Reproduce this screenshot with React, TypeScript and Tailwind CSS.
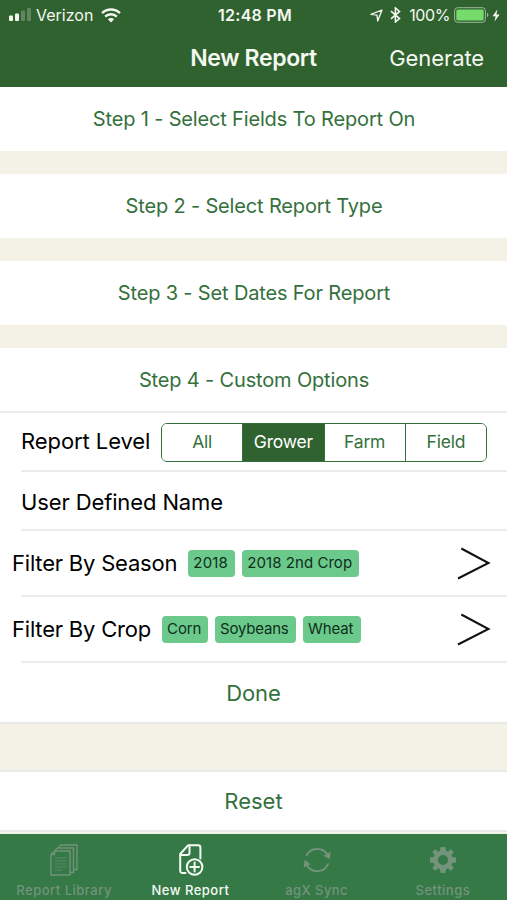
import { useState } from "react";

const steps = [
  "Step 1 - Select Fields To Report On",
  "Step 2 - Select Report Type",
  "Step 3 - Set Dates For Report",
  "Step 4 - Custom Options",
];

const levels = ["All", "Grower", "Farm", "Field"];

const seasons = [
  { name: "2018", style: "w-[47px] tracking-[0.2px]" },
  { name: "2018 2nd Crop", style: "w-[117px] tracking-[0.05px]" },
];

const crops = [
  { name: "Corn", style: "w-[46px] tracking-[-0.1px]" },
  { name: "Soybeans", style: "w-[81px] tracking-[-0.2px]" },
  { name: "Wheat", style: "w-[58px] tracking-[-0.1px]" },
];

function StatusBar() {
  return (
    <div className="grid h-[30px] grid-cols-[1fr_auto_1fr] items-center pl-2 pr-[7px] text-[16px]">
      <div className="flex items-center">
        <svg width="25" height="14" viewBox="0 0 25 14" fill="currentColor">
          <rect x="1" y="7.5" width="4" height="5.5" rx="1" />
          <rect x="7" y="5.5" width="4" height="7.5" rx="1" />
          <rect x="13" y="2.5" width="4" height="10.5" rx="1" opacity="0.25" />
          <rect x="19" y="0" width="4" height="13" rx="1" opacity="0.25" />
        </svg>
        <span className="ml-[3px]">Verizon</span>
        <svg className="ml-[8px]" width="20" height="15" viewBox="0 0 20 15" fill="none" stroke="currentColor" strokeWidth="2.5">
          <path d="M1.1 5.2a12.6 12.6 0 0 1 17.8 0" />
          <path d="M4.2 8.6a8.2 8.2 0 0 1 11.6 0" />
          <path d="M6.9 11.2a4.4 4.4 0 0 1 6.2 0L10 14.4z" fill="currentColor" stroke="none" />
        </svg>
      </div>
      <span className="pl-[2px] font-semibold tracking-[0.25px]">12:48 PM</span>
      <div className="flex items-center justify-end">
        <svg width="13" height="13" viewBox="0 0 13 13" fill="none" stroke="currentColor" strokeWidth="1.3" strokeLinejoin="round">
          <path d="M12 1 1 5.4 7 6.1 7.7 12z" />
        </svg>
        <svg className="ml-[7px]" width="11" height="16" viewBox="0 0 11 16" fill="none" stroke="currentColor" strokeWidth="1.6">
          <path d="M1 4.2 9.5 11.6 5.4 15V1l4.1 3.4L1 11.8" />
        </svg>
        <span className="ml-[8px] tracking-[-0.4px]">100%</span>
        <svg className="ml-[4px]" width="36" height="16" viewBox="0 0 36 16">
          <rect x="0.6" y="0.7" width="30.8" height="14.6" rx="3" fill="none" stroke="#9dbb9b" strokeWidth="1" />
          <rect x="2.3" y="2.4" width="27.4" height="11.2" rx="1.5" fill="#75dc6c" />
          <path d="M33 5.8c1.8.6 1.8 3.8 0 4.4z" fill="#9dbb9b" />
        </svg>
        <svg className="ml-[2px]" width="8" height="13" viewBox="0 0 8 13" fill="currentColor">
          <path d="M5.4.5.5 7.2h3.1L2.5 12.5 7.6 5.6H4.4z" />
        </svg>
      </div>
    </div>
  );
}

function Chevron() {
  return (
    <svg className="mr-4" width="34" height="34" viewBox="0 0 34 34" fill="none" stroke="#111" strokeWidth="2">
      <path d="M4.3 2.5 31.5 17 1 32.5" />
    </svg>
  );
}

function FilterRow({ label, tags }: { label: string; tags: { name: string; style: string }[] }) {
  return (
    <div className="flex h-[66px] flex-col">
      <div className="flex flex-1 items-center pl-3">
        <span className="text-[22px] tracking-[-0.2px]">{label}</span>
        <div className="ml-[11px] flex gap-[7px]">
          {tags.map((t) => (
            <span
              key={t.name}
              className={`flex h-[27px] items-center whitespace-nowrap rounded-[4px] bg-[#6cc98c] pl-[5px] text-[15px] text-[#0d2f1a] ${t.style}`}
            >
              {t.name}
            </span>
          ))}
        </div>
        <div className="ml-auto">
          <Chevron />
        </div>
      </div>
      <div className="ml-[21px] h-[2px] bg-[#ebebeb]" />
    </div>
  );
}

function LibraryIcon() {
  return (
    <svg width="28" height="32" viewBox="0 0 28 32" fill="none" stroke="currentColor" strokeWidth="1.4" strokeLinejoin="round">
      <path d="M4.5 7H20v24H1V10.5z" />
      <path d="M4.5 7v3.5H1M5 6.5 7.5 4H23.5v24.5H20M8.5 3.5 11 1H27v24.5h-3.5" />
      <path d="M4.5 14h12M4.5 17h12M4.5 20h12M4.5 23h12M4.5 26h8" strokeWidth="0.9" opacity="0.75" />
    </svg>
  );
}

function NewReportIcon() {
  return (
    <svg className="ml-[2px]" width="25" height="32" viewBox="0 0 25 32" fill="none" stroke="currentColor" strokeWidth="2" strokeLinejoin="round" strokeLinecap="round">
      <path d="M6.5 29H3.4a2.2 2.2 0 0 1-2.2-2.2V10L9.2 1.2h10A2.2 2.2 0 0 1 21.4 3.4v11" />
      <path d="M1.5 11h6.8a2.2 2.2 0 0 0 2.2-2.2V1.5" />
      <circle cx="15.6" cy="23" r="7.8" />
      <path d="M15.6 18.6v8.8M11.2 23H20" />
    </svg>
  );
}

function SyncIcon() {
  return (
    <svg width="28" height="28" viewBox="0 0 28 28" fill="none" stroke="currentColor" strokeWidth="1.9">
      <path d="M3.3 10A12 12 0 0 1 24.6 9" />
      <path d="M25.3 17.5A12 12 0 0 1 4 19.6" />
      <path d="M20.4 9.8 27.5 5.8 26.8 13.2zM.6 21.6 1.6 13.8 7.6 18.2z" fill="currentColor" stroke="none" />
    </svg>
  );
}

function GearIcon() {
  return (
    <svg width="28" height="28" viewBox="0 0 28 28" fill="currentColor">
      <path
        fillRule="evenodd"
        d="M11.5 1h5l.7 3.9 1.6.7L22 3.3 24.7 6l-2.3 3.2.7 1.6 3.9.7v5l-3.9.7-.7 1.6 2.3 3.2-2.7 2.7-3.2-2.3-1.6.7-.7 3.9h-5l-.7-3.9-1.6-.7L6 24.7 3.3 22l2.3-3.2-.7-1.6L1 16.5v-5l3.9-.7.7-1.6L3.3 6 6 3.3l3.2 2.3 1.6-.7zM14 9a5 5 0 1 0 0 10 5 5 0 0 0 0-10z"
      />
    </svg>
  );
}

const tabs = [
  { label: "Report Library", icon: <LibraryIcon />, spacing: "tracking-[0.5px]" },
  { label: "New Report", icon: <NewReportIcon />, spacing: "tracking-[0.5px]" },
  { label: "agX Sync", icon: <SyncIcon />, spacing: "tracking-[0.45px]" },
  { label: "Settings", icon: <GearIcon />, spacing: "tracking-[0.5px]" },
];

export default function App() {
  const [level, setLevel] = useState("Grower");
  const [tab, setTab] = useState("New Report");

  return (
    <div className="flex h-[900px] w-[507px] flex-col overflow-hidden bg-[#f4f2e6] font-['Inter',sans-serif] text-black">
      <header className="h-[87px] shrink-0 bg-[#306230] text-[#f4f8f1]">
        <StatusBar />
        <div className="grid h-[56px] grid-cols-[1fr_auto_1fr] items-center">
          <h1 className="col-start-2 text-[23px] font-semibold tracking-[-0.35px]">New Report</h1>
          <button className="justify-self-end pr-[23px] text-[22px] tracking-[-0.1px]">Generate</button>
        </div>
      </header>

      <main className="flex flex-1 flex-col">
        <div className="flex flex-col gap-[23px]">
          {steps.map((s) => (
            <button key={s} className="h-[64px] bg-white pl-px text-[20px] tracking-[-0.16px] text-[#34703c] last:h-[63px]">
              {s}
            </button>
          ))}
        </div>

        <section className="border-t-2 border-[#ebebeb] bg-white">
          <div className="ml-[21px] flex h-[59px] items-center border-b-2 border-[#ebebeb]">
            <span className="text-[22px] tracking-[-0.08px]">Report Level</span>
            <div className="ml-auto mr-5 mt-[2px] flex h-[39px] w-[326px] overflow-hidden rounded-[6px] border border-[#34703c]">
              {levels.map((l) => (
                <button
                  key={l}
                  onClick={() => setLevel(l)}
                  className={`flex-1 border-l border-[#34703c] text-[17.5px] tracking-[-0.2px] first:border-l-0 ${
                    l === level ? "bg-[#306230] text-white" : "bg-white text-[#34703c]"
                  }`}
                >
                  {l}
                </button>
              ))}
            </div>
          </div>
          <div className="ml-[21px] flex h-[59px] items-center border-b-2 border-[#ebebeb] pt-[3px]">
            <span className="text-[22px] tracking-[-0.12px]">User Defined Name</span>
          </div>
          <FilterRow label="Filter By Season" tags={seasons} />
          <FilterRow label="Filter By Crop" tags={crops} />
          <button className="h-[61px] w-full border-b-2 border-[#e9e9e6] pt-px text-[22px] tracking-[-0.1px] text-[#34703c]">Done</button>
        </section>

        <button className="mt-[46px] h-[62px] border-y-2 border-[#e9e9e6] bg-white text-[22px] text-[#34703c]">Reset</button>
      </main>

      <nav className="grid h-[66px] shrink-0 grid-cols-4 bg-[#357947] px-[1px]">
        {tabs.map((t) => (
          <button
            key={t.label}
            onClick={() => setTab(t.label)}
            className={`flex flex-col items-center ${t.label === tab ? "text-[#f4fbf4]" : "text-[#73937b]"}`}
          >
            <span className="flex h-[49px] items-center pt-[2px]">{t.icon}</span>
            <span className={`whitespace-nowrap text-[13px] font-medium leading-[14px] ${t.spacing}`}>{t.label}</span>
          </button>
        ))}
      </nav>
    </div>
  );
}
